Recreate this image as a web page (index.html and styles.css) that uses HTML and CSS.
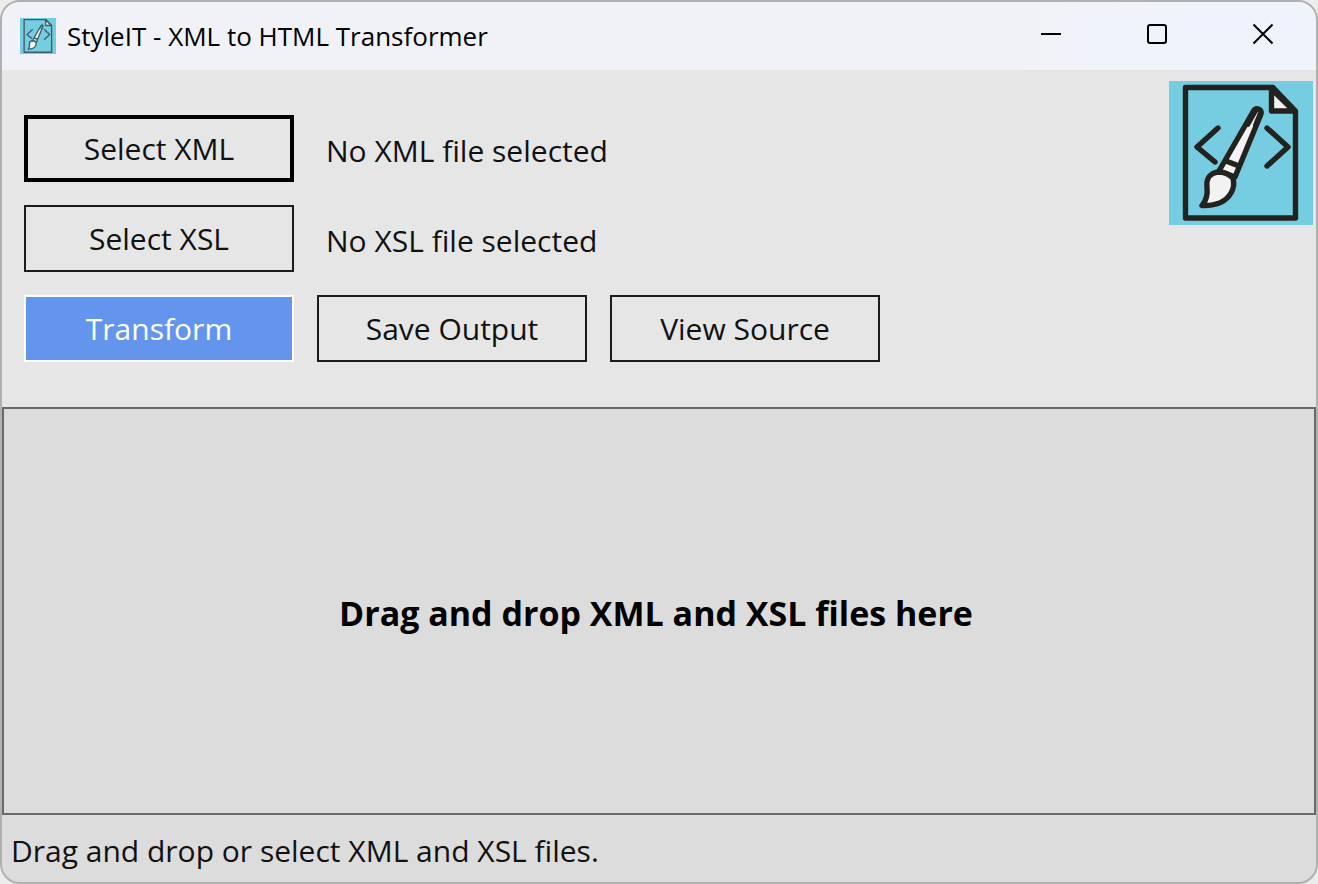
FILE: index.html
```html
<!DOCTYPE html>
<html lang="en">
<head>
<meta charset="utf-8">
<title>StyleIT - XML to HTML Transformer</title>
<link rel="stylesheet" href="styles.css">
</head>
<body>
<svg class="defs" aria-hidden="true">
  <symbol id="logo" viewBox="0 0 144 144">
    <rect width="144" height="144" fill="#76cde1" stroke="none"/>
    <g stroke-width="5.4" stroke-linejoin="round" stroke-linecap="round" fill="none">
      <path d="M104 6.5H16.5V137H126.500V30Z"/>
      <path d="M102.500 8V30H125Z" fill="#f2f2f2"/>
      <path d="M49 47 28 66 46 81M98 47 119 66 98 85"/>
      <path d="M50 90 84.500 30C87 26 93 28 92 33L66 96Z" fill="#f2f2f2"/>
      <path d="M79 44 87 30M86 44 91 32" stroke-width="4"/>
      <path d="M57 80 70 85"/>
      <path d="M49 91C41 92 37 98 38 106C39 115 37 120 33 124.500C50 125 58 119 62 112C65 107 65 101 64 97C60 93 55 91 49 91Z" fill="#f2f2f2"/>
    </g>
  </symbol>
</svg>
<div class="window">
  <header class="titlebar">
    <svg class="app-icon" aria-hidden="true"><use href="#logo"/></svg>
    <h1 class="title">StyleIT - XML to HTML Transformer</h1>
    <div class="controls">
      <button class="control" aria-label="Minimize"><svg viewBox="0 0 20 20"><path d="M0 10H20"/></svg></button>
      <button class="control" aria-label="Maximize"><svg viewBox="0 0 20 20"><rect x="1" y="1" width="18" height="18" rx="2"/></svg></button>
      <button class="control" aria-label="Close"><svg viewBox="0 0 20 20"><path d="M.5 .5 19.500 19.500M19.500 .5 .5 19.500"/></svg></button>
    </div>
  </header>
  <main class="main">
    <section class="toolbar">
      <div class="actions">
        <div class="row">
          <button class="btn btn-default" aria-describedby="xml-file">Select XML</button>
          <span class="file" id="xml-file">No XML file selected</span>
        </div>
        <div class="row">
          <button class="btn" aria-describedby="xsl-file">Select XSL</button>
          <span class="file" id="xsl-file">No XSL file selected</span>
        </div>
        <div class="row">
          <button class="btn btn-primary">Transform</button>
          <button class="btn">Save Output</button>
          <button class="btn">View Source</button>
        </div>
      </div>
      <svg class="logo" role="img" aria-label="StyleIT"><use href="#logo"/></svg>
    </section>
    <section class="dropzone">Drag and drop XML and XSL files here</section>
  </main>
  <footer class="status">Drag and drop or select XML and XSL files.</footer>
</div>
</body>
</html>
```
FILE: styles.css
```css
* { box-sizing: border-box; }

body {
  margin: 0;
  background: #ececec;
  color: #111;
  font-family: "Open Sans", "Noto Sans", sans-serif;
  font-size: 30px;
  line-height: 40px;
}

.defs { position: absolute; width: 0; height: 0; }

.window {
  display: flex;
  flex-direction: column;
  min-height: 100vh;
  border: 2px solid #b0b0b0;
  border-radius: 20px;
  background: #dcdcdc;
  overflow: hidden;
}

.titlebar {
  display: flex;
  align-items: center;
  height: 68px;
  padding-left: 18px;
  background: linear-gradient(90deg, #f1f2f7 75%, #eff3fb 90%);
}

.app-icon { width: 36px; height: 36px; stroke: #3c5f66; }

.title {
  flex: 1;
  margin: 0 0 0 11px;
  color: #000;
  font-size: 26px;
  font-weight: 400;
  line-height: 36px;
}

.controls { display: flex; }

.control {
  display: grid;
  place-items: center;
  width: 106px;
  height: 68px;
  padding: 0 0 4px;
  border: 0;
  background: none;
}

.control svg {
  width: 20px;
  height: 20px;
  overflow: visible;
  fill: none;
  stroke: #000;
  stroke-width: 2;
}

.main { flex: 1; display: flex; flex-direction: column; }

.toolbar {
  display: flex;
  justify-content: space-between;
  align-items: flex-start;
  padding: 11px 3px 45px 22px;
  background: #e6e6e6;
}

.actions { display: grid; gap: 23px; padding-top: 34px; }

.row { display: flex; align-items: center; gap: 23px; }

.btn {
  width: 270px;
  height: 67px;
  padding: 0;
  border: 2px solid #1c1c1c;
  background: #e6e6e6;
  color: inherit;
  font: inherit;
}

.btn-default { border: 4px solid #000; }

.btn-primary {
  border-color: #fff;
  background: #6495ed;
  color: #fff;
}

.file { padding: 4px 0 0 9px; }

.logo { width: 144px; height: 144px; stroke: #22231f; }

.dropzone {
  flex: 1;
  display: grid;
  place-items: center;
  padding: 4px 6px 0 0;
  border: 2px solid #6a6a6a;
  background: #dcdcdc;
  color: #000;
  font-size: 34px;
  font-weight: 700;
}

.status { padding: 16px 9px 11px; }
```
